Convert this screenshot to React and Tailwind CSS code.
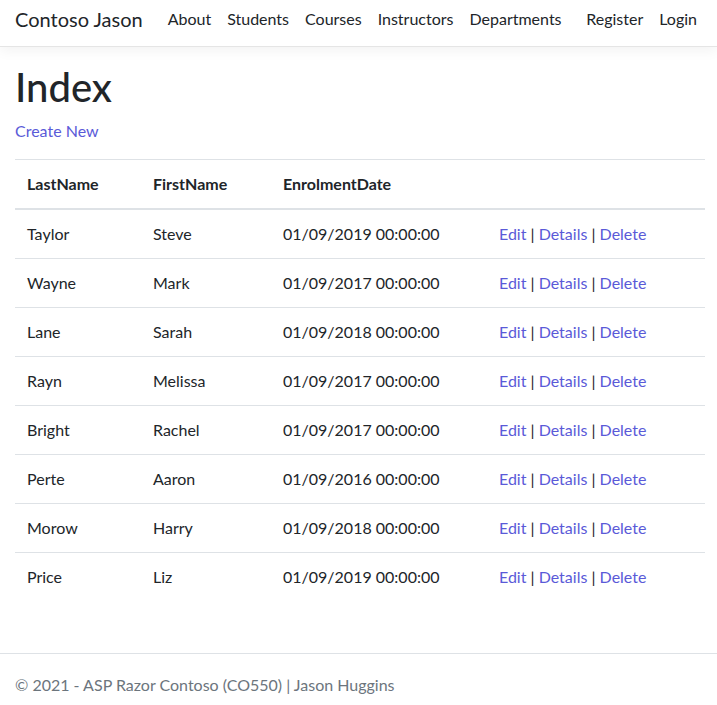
const STUDENTS = [
  { last: "Taylor", first: "Steve", date: "01/09/2019 00:00:00" },
  { last: "Wayne", first: "Mark", date: "01/09/2017 00:00:00" },
  { last: "Lane", first: "Sarah", date: "01/09/2018 00:00:00" },
  { last: "Rayn", first: "Melissa", date: "01/09/2017 00:00:00" },
  { last: "Bright", first: "Rachel", date: "01/09/2017 00:00:00" },
  { last: "Perte", first: "Aaron", date: "01/09/2016 00:00:00" },
  { last: "Morow", first: "Harry", date: "01/09/2018 00:00:00" },
  { last: "Price", first: "Liz", date: "01/09/2019 00:00:00" },
];

const NAV = ["About", "Students", "Courses", "Instructors", "Departments"];

export default function App() {
  return (
    <div className="min-h-[705px] bg-white text-[#212529] font-['Segoe_UI',Lato,sans-serif] text-base">
      <header className="h-[47px] border-b border-[#e5e5e5] shadow-[0_4px_12px_rgba(0,0,0,0.05)] flex items-center pb-[8px] pl-[15px] pr-[12px] whitespace-nowrap">
        <span className="text-[20px] text-[#212529] mr-[17px] shrink-0">Contoso Jason</span>
        <nav className="flex flex-1 items-center">
          {NAV.map((n) => (
            <a key={n} className="px-2 text-[#212529] leading-6">{n}</a>
          ))}
          <div className="ml-auto flex">
            <a className="px-2 text-[#212529]">Register</a>
            <a className="px-2 text-[#212529]">Login</a>
          </div>
        </nav>
      </header>

      <main className="pl-[15px] pr-[12px] pt-[16px]">
        <h1 className="text-[40px] font-medium leading-[1.2] mb-2">Index</h1>
        <p className="mb-[16px]">
          <a className="text-[#5a5ad8]">Create New</a>
        </p>
        <table className="w-full border-collapse">
          <thead>
            <tr className="border-t border-[#dee2e6] border-b-2">
              <th className="text-left font-bold px-3 py-3 w-[126px]">LastName</th>
              <th className="text-left font-bold px-3 py-3 w-[130px]">FirstName</th>
              <th className="text-left font-bold px-3 py-3 w-[216px]">EnrolmentDate</th>
              <th className="px-3 py-3"></th>
            </tr>
          </thead>
          <tbody>
            {STUDENTS.map((s, i) => (
              <tr key={s.last} className={i ? "border-t border-[#dee2e6]" : ""}>
                <td className="px-3 py-3">{s.last}</td>
                <td className="px-3 py-3">{s.first}</td>
                <td className="px-3 py-3">{s.date}</td>
                <td className="px-3 py-3 whitespace-nowrap">
                  <a className="text-[#5a5ad8]">Edit</a> |{" "}
                  <a className="text-[#5a5ad8]">Details</a> |{" "}
                  <a className="text-[#5a5ad8]">Delete</a>
                </td>
              </tr>
            ))}
          </tbody>
        </table>
      </main>

      <footer className="mt-[52px] border-t border-[#dee2e6] pl-[15px] pt-[19px] text-[#6c757d]">
        © 2021 - ASP Razor Contoso (CO550) | Jason Huggins
      </footer>
    </div>
  );
}
